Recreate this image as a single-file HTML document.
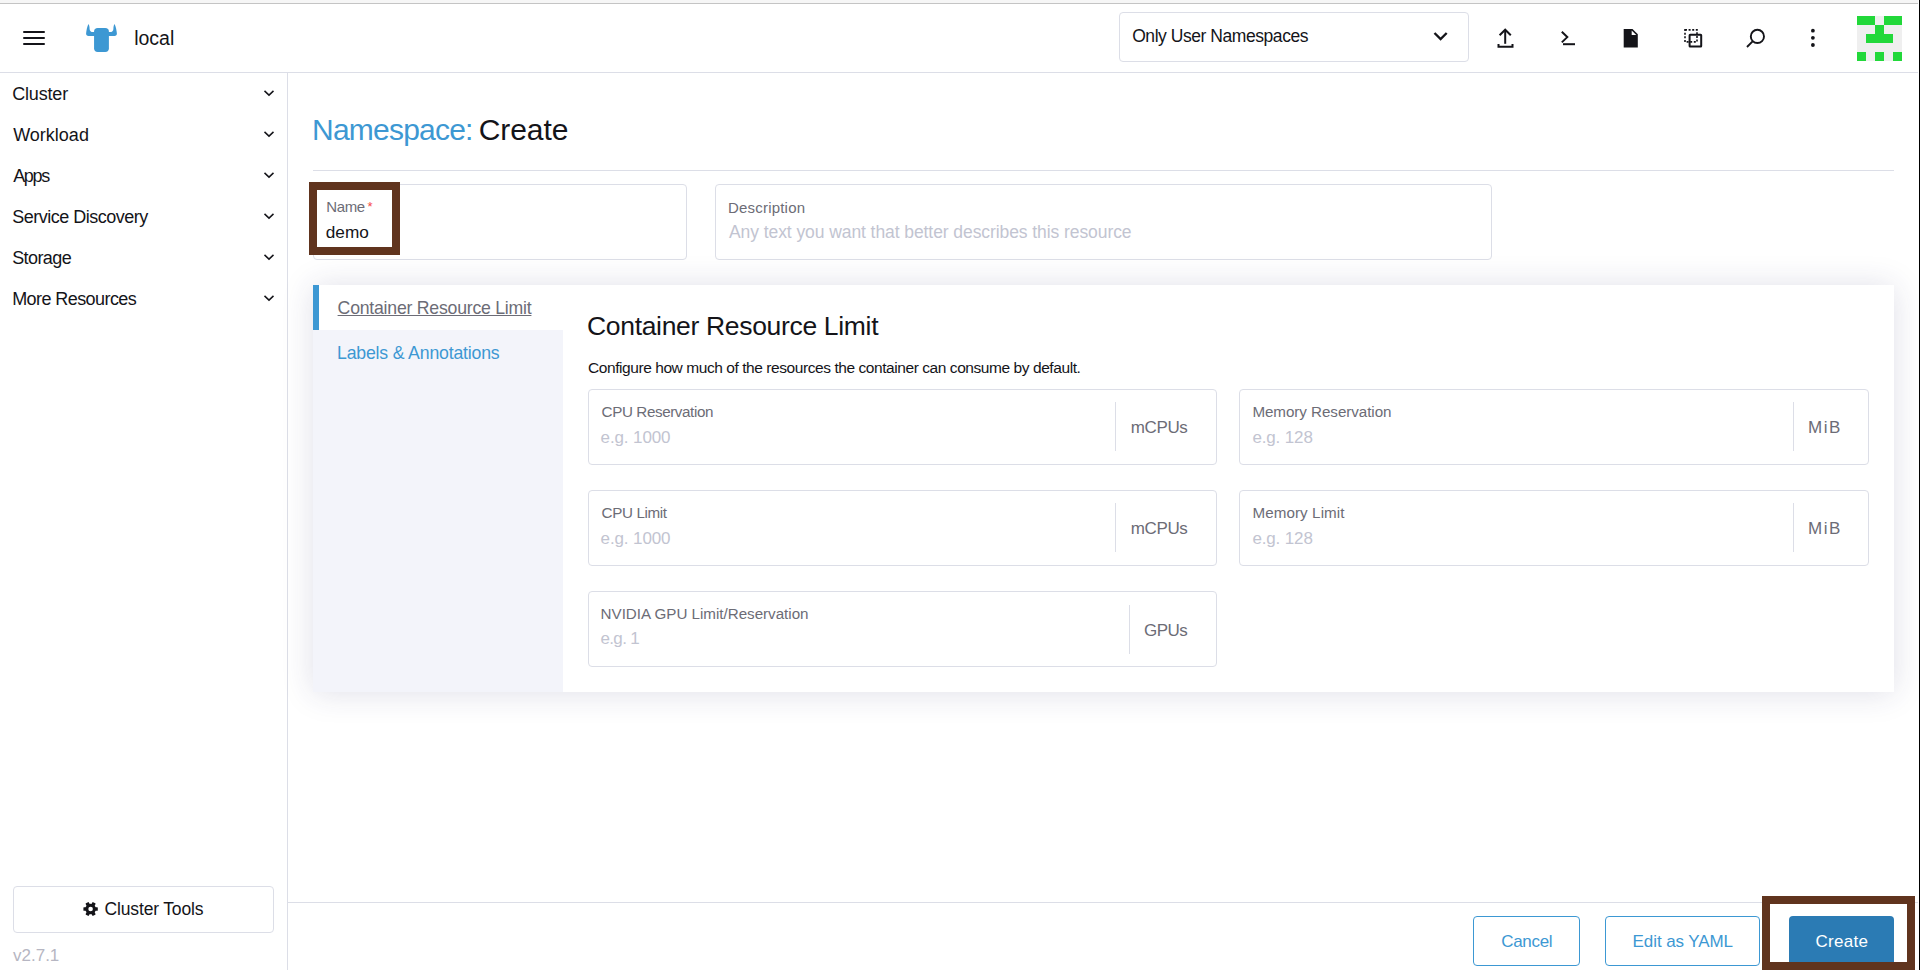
<!DOCTYPE html>
<html><head><meta charset="utf-8"><style>
*{box-sizing:border-box;margin:0;padding:0}
html,body{width:1920px;height:970px;overflow:hidden;background:#fff;font-family:"Liberation Sans",sans-serif;}
.t{position:absolute;white-space:nowrap;line-height:1;}
.a{position:absolute;}
.box{position:absolute;border:1px solid #dcdee7;border-radius:4px;background:#fff;}
.sep{position:absolute;width:1px;background:#dcdee7;}
.hl{position:absolute;border:8px solid #60341e;}
.btn{position:absolute;border:1px solid #3d98d3;border-radius:4px;background:#fff;}
</style></head><body>
<div class="a" style="left:0;top:0;width:1918px;height:3px;background:#f6f6f6"></div>
<div class="a" style="left:0;top:3px;width:1918px;height:1px;background:#c4c4c4"></div>
<div class="a" style="left:1919px;top:0;width:1px;height:970px;background:#000"></div>
<div class="a" style="left:0;top:72px;width:1918px;height:1px;background:#dcdee7"></div>
<div class="a" style="left:287px;top:72px;width:1px;height:898px;background:#dcdee7"></div>
<div class="a" style="left:23px;top:30.6px;width:22px;height:2.3px;background:#141419;border-radius:1px"></div>
<div class="a" style="left:23px;top:36.8px;width:22px;height:2.3px;background:#141419;border-radius:1px"></div>
<div class="a" style="left:23px;top:43.0px;width:22px;height:2.3px;background:#141419;border-radius:1px"></div>
<svg class="a" style="left:0;top:0" width="130" height="60" viewBox="0 0 130 60"><g fill="#3d98d3">
<path d="M88.5,23.9 C89.3,24.8 89.6,27 89.6,29 C89.6,31 91,32.1 93,32.1 L95,32.1 L95,36 L88.5,36 C87,36 86,35 86.1,33.5 C86.3,30.5 87.2,26 88.5,23.9 Z"/>
<path d="M114.5,23.9 C113.7,24.8 113.4,27 113.4,29 C113.4,31 112,32.1 110,32.1 L108,32.1 L108,36 L114.5,36 C116,36 117,35 116.9,33.5 C116.7,30.5 115.8,26 114.5,23.9 Z"/>
<rect x="94.06" y="28" width="14.84" height="23.9" rx="3.7"/></g></svg>
<div class="box" style="left:1119px;top:12px;width:350px;height:50px"></div>
<svg class="a" style="left:1400px;top:0" width="500" height="72" viewBox="1400 0 500 72">
<g fill="none" stroke="#141419" stroke-width="2.4" stroke-linecap="butt" stroke-linejoin="miter">
<path d="M1434.5,33 L1440.6,39 L1446.7,33"/>
</g>
<g fill="none" stroke="#141419" stroke-width="2" >
<path d="M1505.2,30 L1505.2,43.8"/>
<path d="M1499.6,35.3 L1505.2,29.7 L1510.8,35.3"/>
<path d="M1498.5,44 L1498.5,46.8 L1512.5,46.8 L1512.5,44"/>
<path d="M1561.8,31.8 L1567.3,37.1 L1561.8,42.4"/>
<path d="M1563,44.2 L1575,44.2"/>
<rect x="1689.6" y="34.8" width="11.6" height="11.8" rx="0.5"/>
<circle cx="1757.4" cy="36.4" r="6.6" stroke-width="1.9"/>
<path d="M1752.6,41.4 L1747,47" stroke-width="1.9"/>
</g>
<g fill="none" stroke="#141419" stroke-width="1.6" stroke-dasharray="2 1.6">
<rect x="1685" y="29.9" width="12" height="12"/>
</g>
<path d="M1623.7,29 L1632.5,29 L1637.8,34.3 L1637.8,47.5 L1623.7,47.5 Z" fill="#141419"/>
<path d="M1631.7,30.4 L1631.7,35 L1636.3,35 Z" fill="#fff"/>
<g fill="#141419"><circle cx="1812.9" cy="30.7" r="1.9"/><circle cx="1812.9" cy="37.8" r="1.9"/><circle cx="1812.9" cy="45" r="1.9"/></g>
</svg>
<div class="a" style="left:1857px;top:16px;width:45px;height:45px;background:#efefef"></div><div class="a" style="left:1857px;top:16px;width:9px;height:9px;background:#22d83a"></div><div class="a" style="left:1866px;top:16px;width:9px;height:9px;background:#22d83a"></div><div class="a" style="left:1884px;top:16px;width:9px;height:9px;background:#22d83a"></div><div class="a" style="left:1893px;top:16px;width:9px;height:9px;background:#22d83a"></div><div class="a" style="left:1875px;top:25px;width:9px;height:9px;background:#22d83a"></div><div class="a" style="left:1866px;top:34px;width:9px;height:9px;background:#22d83a"></div><div class="a" style="left:1875px;top:34px;width:9px;height:9px;background:#22d83a"></div><div class="a" style="left:1884px;top:34px;width:9px;height:9px;background:#22d83a"></div><div class="a" style="left:1857px;top:52px;width:9px;height:9px;background:#22d83a"></div><div class="a" style="left:1875px;top:52px;width:9px;height:9px;background:#22d83a"></div><div class="a" style="left:1893px;top:52px;width:9px;height:9px;background:#22d83a"></div>
<svg class="a" style="left:0;top:0" width="288" height="320" viewBox="0 0 288 320"><g fill="none" stroke="#141419" stroke-width="1.5"><path d="M264.5,90.9 L269,95.1 L273.5,90.9"/><path d="M264.5,131.9 L269,136.1 L273.5,131.9"/><path d="M264.5,172.9 L269,177.1 L273.5,172.9"/><path d="M264.5,213.9 L269,218.1 L273.5,213.9"/><path d="M264.5,254.9 L269,259.1 L273.5,254.9"/><path d="M264.5,295.9 L269,300.1 L273.5,295.9"/></g></svg>
<div class="box" style="left:13px;top:886px;width:261px;height:47px"></div>
<svg class="a" style="left:80px;top:899px" width="22" height="20" viewBox="80 899 22 20"><g fill="#141419">
<circle cx="90.6" cy="909" r="5.3"/>
<rect x="83.4" y="907.2" width="14.4" height="3.6" rx="0.6"/>
<rect x="83.4" y="907.2" width="14.4" height="3.6" rx="0.6" transform="rotate(60 90.6 909)"/>
<rect x="83.4" y="907.2" width="14.4" height="3.6" rx="0.6" transform="rotate(120 90.6 909)"/>
</g><circle cx="90.6" cy="909" r="2.3" fill="#fff"/></svg>
<div class="a" style="left:313px;top:170px;width:1581px;height:1px;background:#dcdee7"></div>
<div class="box" style="left:313px;top:184px;width:374px;height:76px"></div>
<div class="box" style="left:715px;top:184px;width:777px;height:76px"></div>
<div class="t" style="left:367.6px;top:199.5px;font-size:13px;color:#f64747">*</div>
<div class="a" style="left:313px;top:285px;width:1581px;height:407px;background:#fff;box-shadow:0 1px 30px rgba(40,40,100,0.15)"></div>
<div class="a" style="left:313px;top:330px;width:250px;height:362px;background:#f3f4fa"></div>
<div class="a" style="left:313px;top:285px;width:6px;height:45px;background:#3d98d3"></div>
<div class="box" style="left:588px;top:389px;width:629px;height:76px"></div><div class="sep" style="left:1115px;top:402px;height:49px"></div>
<div class="box" style="left:1239px;top:389px;width:630px;height:76px"></div><div class="sep" style="left:1793px;top:402px;height:49px"></div>
<div class="box" style="left:588px;top:490px;width:629px;height:76px"></div><div class="sep" style="left:1115px;top:503px;height:49px"></div>
<div class="box" style="left:1239px;top:490px;width:630px;height:76px"></div><div class="sep" style="left:1793px;top:503px;height:49px"></div>
<div class="box" style="left:588px;top:591px;width:629px;height:76px"></div><div class="sep" style="left:1129px;top:605px;height:49px"></div>
<div class="a" style="left:288px;top:902px;width:1630px;height:1px;background:#dcdee7"></div>
<div class="btn" style="left:1473px;top:916px;width:107px;height:50px"></div>
<div class="btn" style="left:1605px;top:916px;width:155px;height:50px"></div>
<div class="a" style="left:1789px;top:916px;width:105px;height:50px;background:#2b7bb4;border-radius:4px"></div>
<div class="hl" style="left:309px;top:182px;width:91px;height:73px"></div>
<div class="hl" style="left:1762px;top:896px;width:153px;height:74px"></div>
<div id="local" class="t" style="left:134.20px;top:29.20px;font-size:19.5px;letter-spacing:0.000px;color:#141419;">local</div>
<div id="nav1" class="t" style="left:12.20px;top:85.30px;font-size:18px;letter-spacing:-0.167px;color:#141419;">Cluster</div>
<div id="nav2" class="t" style="left:13.20px;top:126.20px;font-size:18px;letter-spacing:0.000px;color:#141419;">Workload</div>
<div id="nav3" class="t" style="left:13.20px;top:167.30px;font-size:18px;letter-spacing:-1.333px;color:#141419;">Apps</div>
<div id="nav4" class="t" style="left:12.20px;top:207.80px;font-size:18px;letter-spacing:-0.500px;color:#141419;">Service Discovery</div>
<div id="nav5" class="t" style="left:12.20px;top:249.00px;font-size:18px;letter-spacing:-0.583px;color:#141419;">Storage</div>
<div id="nav6" class="t" style="left:12.20px;top:289.90px;font-size:18px;letter-spacing:-0.577px;color:#141419;">More Resources</div>
<div id="ns" class="t" style="left:1132.20px;top:27.60px;font-size:17.5px;letter-spacing:-0.447px;color:#141419;">Only User Namespaces</div>
<div id="t1" class="t" style="left:312.00px;top:115.00px;font-size:30px;letter-spacing:-0.778px;color:#3d98d3;">Namespace:</div>
<div id="t2" class="t" style="left:478.80px;top:115.00px;font-size:30px;letter-spacing:-0.100px;color:#141419;">Create</div>
<div id="namel" class="t" style="left:326.20px;top:198.90px;font-size:15px;letter-spacing:-0.333px;color:#6c6c76;">Name</div>
<div id="demo" class="t" style="left:325.80px;top:223.70px;font-size:17.2px;letter-spacing:-0.000px;color:#141419;">demo</div>
<div id="descl" class="t" style="left:728.00px;top:199.80px;font-size:15px;letter-spacing:0.200px;color:#6c6c76;">Description</div>
<div id="descph" class="t" style="left:729.00px;top:223.50px;font-size:17.5px;letter-spacing:-0.077px;color:#c2c4d1;">Any text you want that better describes this resource</div>
<div id="tab1" class="t" style="left:337.60px;top:299.75px;font-size:17.7px;letter-spacing:-0.239px;color:#6c6c76;text-decoration:underline;text-underline-offset:1px;">Container Resource Limit</div>
<div id="tab2" class="t" style="left:337.00px;top:344.75px;font-size:17.7px;letter-spacing:-0.184px;color:#3d98d3;">Labels &amp; Annotations</div>
<div id="h3" class="t" style="left:587.00px;top:312.70px;font-size:26.5px;letter-spacing:-0.326px;color:#141419;">Container Resource Limit</div>
<div id="conf" class="t" style="left:588.00px;top:360.10px;font-size:15.5px;letter-spacing:-0.431px;color:#141419;">Configure how much of the resources the container can consume by default.</div>
<div id="l1" class="t" style="left:601.60px;top:404.30px;font-size:15.2px;letter-spacing:-0.393px;color:#6c6c76;">CPU Reservation</div>
<div id="p1" class="t" style="left:600.60px;top:428.60px;font-size:17px;letter-spacing:-0.125px;color:#c2c4d1;">e.g. 1000</div>
<div id="u1" class="t" style="left:1130.80px;top:419.40px;font-size:17px;letter-spacing:-0.375px;color:#6c6c76;">mCPUs</div>
<div id="l2" class="t" style="left:1252.40px;top:404.30px;font-size:15.2px;letter-spacing:-0.059px;color:#6c6c76;">Memory Reservation</div>
<div id="p2" class="t" style="left:1252.40px;top:428.60px;font-size:17px;letter-spacing:-0.143px;color:#c2c4d1;">e.g. 128</div>
<div id="u2" class="t" style="left:1808.00px;top:419.40px;font-size:17px;letter-spacing:1.500px;color:#6c6c76;">MiB</div>
<div id="l3" class="t" style="left:601.60px;top:505.30px;font-size:15.2px;letter-spacing:-0.375px;color:#6c6c76;">CPU Limit</div>
<div id="p3" class="t" style="left:600.60px;top:529.60px;font-size:17px;letter-spacing:-0.125px;color:#c2c4d1;">e.g. 1000</div>
<div id="u3" class="t" style="left:1130.80px;top:520.40px;font-size:17px;letter-spacing:-0.375px;color:#6c6c76;">mCPUs</div>
<div id="l4" class="t" style="left:1252.40px;top:505.30px;font-size:15.2px;letter-spacing:0.091px;color:#6c6c76;">Memory Limit</div>
<div id="p4" class="t" style="left:1252.40px;top:529.60px;font-size:17px;letter-spacing:-0.143px;color:#c2c4d1;">e.g. 128</div>
<div id="u4" class="t" style="left:1808.00px;top:520.40px;font-size:17px;letter-spacing:1.500px;color:#6c6c76;">MiB</div>
<div id="l5" class="t" style="left:600.60px;top:606.40px;font-size:15.2px;letter-spacing:-0.019px;color:#6c6c76;">NVIDIA GPU Limit/Reservation</div>
<div id="p5" class="t" style="left:600.60px;top:630.20px;font-size:17px;letter-spacing:-0.700px;color:#c2c4d1;">e.g. 1</div>
<div id="u5" class="t" style="left:1144.00px;top:621.80px;font-size:17px;letter-spacing:-0.500px;color:#6c6c76;">GPUs</div>
<div id="ctools" class="t" style="left:104.60px;top:901.00px;font-size:17.5px;letter-spacing:-0.167px;color:#141419;">Cluster Tools</div>
<div id="ver" class="t" style="left:13.00px;top:947.00px;font-size:17px;letter-spacing:-0.000px;color:#b6b6c2;">v2.7.1</div>
<div id="cancel" class="t" style="left:1501.20px;top:933.30px;font-size:17px;letter-spacing:-0.300px;color:#3d98d3;">Cancel</div>
<div id="yaml" class="t" style="left:1632.60px;top:933.30px;font-size:17px;letter-spacing:-0.091px;color:#3d98d3;">Edit as YAML</div>
<div id="create" class="t" style="left:1815.40px;top:932.80px;font-size:17px;letter-spacing:0.300px;color:#ffffff;">Create</div>
</body></html>
